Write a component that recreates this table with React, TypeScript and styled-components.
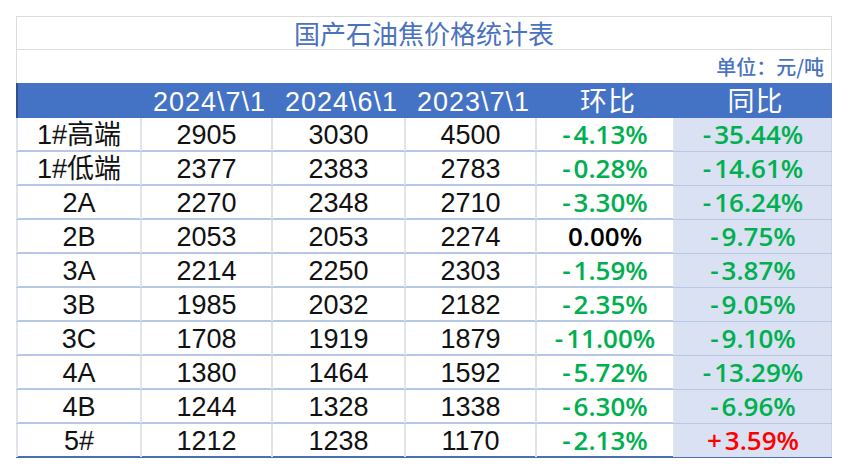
import React, { FC } from 'react'
import styled, { createGlobalStyle } from 'styled-components'

type TRow = {
  name: string
  cur: number
  prev: number
  lastYear: number
  mom: string
  yoy: string
}

const rows: TRow[] = [
  { name: '1#高端', cur: 2905, prev: 3030, lastYear: 4500, mom: '-4.13%', yoy: '-35.44%' },
  { name: '1#低端', cur: 2377, prev: 2383, lastYear: 2783, mom: '-0.28%', yoy: '-14.61%' },
  { name: '2A', cur: 2270, prev: 2348, lastYear: 2710, mom: '-3.30%', yoy: '-16.24%' },
  { name: '2B', cur: 2053, prev: 2053, lastYear: 2274, mom: '0.00%', yoy: '-9.75%' },
  { name: '3A', cur: 2214, prev: 2250, lastYear: 2303, mom: '-1.59%', yoy: '-3.87%' },
  { name: '3B', cur: 1985, prev: 2032, lastYear: 2182, mom: '-2.35%', yoy: '-9.05%' },
  { name: '3C', cur: 1708, prev: 1919, lastYear: 1879, mom: '-11.00%', yoy: '-9.10%' },
  { name: '4A', cur: 1380, prev: 1464, lastYear: 1592, mom: '-5.72%', yoy: '-13.29%' },
  { name: '4B', cur: 1244, prev: 1328, lastYear: 1338, mom: '-6.30%', yoy: '-6.96%' },
  { name: '5#', cur: 1212, prev: 1238, lastYear: 1170, mom: '-2.13%', yoy: '+3.59%' },
]

const headers = ['', '2024\\7\\1', '2024\\6\\1', '2023\\7\\1', '环比', '同比']

const tone = (v: string) => (v.startsWith('-') ? 'down' : v.startsWith('+') ? 'up' : 'flat')

// excel shows a little gap after the sign
const Pct: FC<{ value: string }> = ({ value }) => {
  const sign = value[0] === '-' || value[0] === '+' ? value[0] : ''
  return (
    <>
      {sign && <Sign>{sign}</Sign>}
      {sign ? value.slice(1) : value}
    </>
  )
}

const App: FC = () => {
  return (
    <>
      <GlobalStyle />
      <Sheet>
        <TitleRow>国产石油焦价格统计表</TitleRow>
        <UnitRow>单位：元/吨</UnitRow>
        <HeaderRow>
          {headers.map((h, i) => (
            <HeadCell key={i}>{h}</HeadCell>
          ))}
        </HeaderRow>
        {rows.map((r, i) => (
          <DataRow key={r.name} $last={i === rows.length - 1}>
            <Cell>{r.name}</Cell>
            <Cell>{r.cur}</Cell>
            <Cell>{r.prev}</Cell>
            <Cell>{r.lastYear}</Cell>
            <PctCell $tone={tone(r.mom)}>
              <Pct value={r.mom} />
            </PctCell>
            <PctCell $tone={tone(r.yoy)} $shaded>
              <Pct value={r.yoy} />
            </PctCell>
          </DataRow>
        ))}
      </Sheet>
    </>
  )
}

export default App

const GlobalStyle = createGlobalStyle`
  body {
    margin: 0;
    background: #ffffff;
    font-family: 'Liberation Sans', 'Noto Sans CJK SC', sans-serif;
  }
`

const cols = '126px 131px 133px 131px 138px 157px'

const Sheet = styled.div`
  width: 816px;
  margin: 16px 0 0 16px;
  display: flex;
  flex-direction: column;
`

const TitleRow = styled.div`
  height: 34px;
  box-sizing: border-box;
  border: 1px solid #dcdcdc;
  display: flex;
  align-items: center;
  justify-content: center;
  font-family: 'Noto Sans CJK SC', sans-serif;
  font-size: 26px;
  line-height: 1.1;
  color: #4a72c0;
`

const UnitRow = styled.div`
  height: 33px;
  box-sizing: border-box;
  border-left: 1px solid #dcdcdc;
  border-right: 1px solid #dcdcdc;
  display: flex;
  align-items: center;
  justify-content: flex-end;
  padding-right: 7px;
  font-family: 'Noto Sans CJK SC', sans-serif;
  font-size: 20px;
  line-height: 1.2;
  font-weight: 500;
  color: #4a72c0;
`

const HeaderRow = styled.div`
  display: grid;
  grid-template-columns: ${cols};
  height: 35px;
  background: #4472c4;
  border-left: 2px solid #2f4f8a;
  box-sizing: border-box;
`

const HeadCell = styled.div`
  display: flex;
  align-items: flex-end;
  justify-content: center;
  color: #ffffff;
  font-size: 27px;
  letter-spacing: 1px;
  line-height: 1.15;
  font-family: 'Liberation Sans', 'Noto Sans CJK SC', sans-serif;
  white-space: nowrap;
`

const DataRow = styled.div<{ $last?: boolean }>`
  display: grid;
  grid-template-columns: ${cols};
  height: 34px;
  box-sizing: border-box;
  border-bottom: ${(p) => (p.$last ? '2px solid #4a6fb5' : '2px solid #b7c7e6')};
`

const Cell = styled.div`
  display: flex;
  align-items: center;
  justify-content: center;
  border-right: 2px solid #dfe3ea;
  font-size: 27px;
  line-height: 1.15;
  color: #111111;
  white-space: nowrap;
  padding-top: 2px;
  &:first-child {
    border-left: 2px solid #dfe3ea;
  }
`

const PctCell = styled(Cell)<{ $tone: string; $shaded?: boolean }>`
  font-family: 'Open Sans', 'Liberation Sans', sans-serif;
  font-size: 26px;
  font-weight: 600;
  padding-top: 0;
  background: ${(p) => (p.$shaded ? '#d9e1f2' : 'transparent')};
  color: ${(p) => (p.$tone === 'down' ? '#00b050' : p.$tone === 'up' ? '#ff0000' : '#000000')};
  border-right: ${(p) => (p.$shaded ? '1px solid #cfd6e3' : '2px solid #dfe3ea')};
`

const Sign = styled.span`
  margin-right: 3px;
`
